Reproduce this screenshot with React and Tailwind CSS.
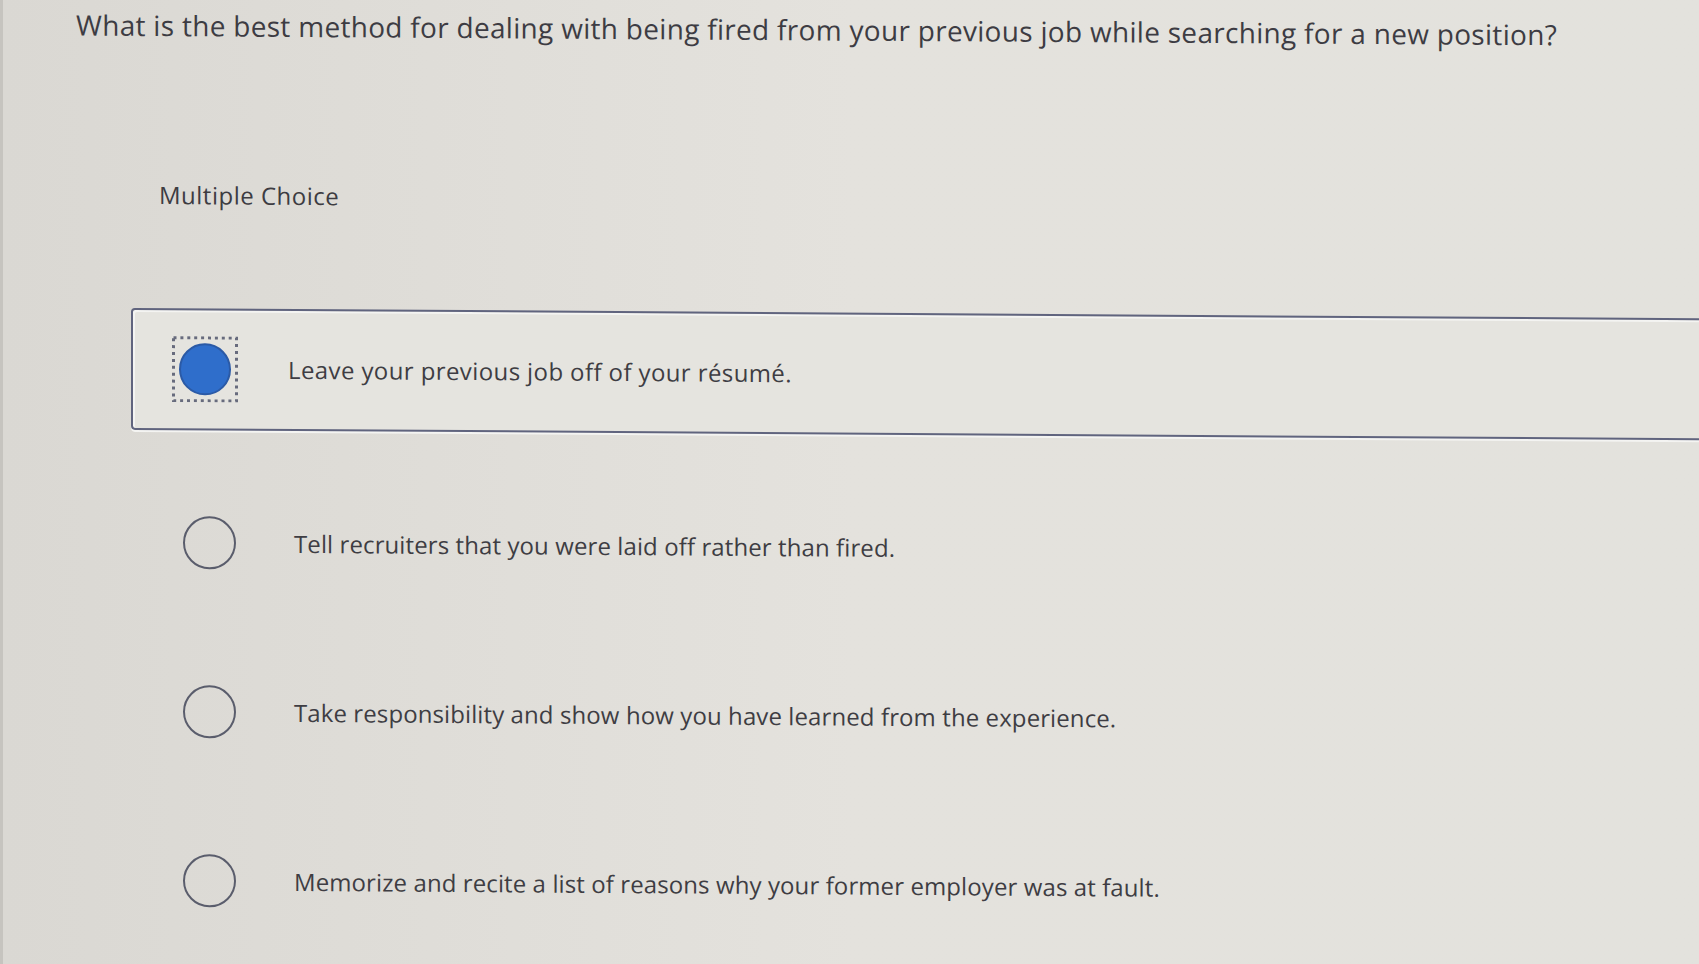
import React from "react";

const font = { fontFamily: "'Open Sans', Lato, 'Liberation Sans', sans-serif" };

function Radio() {
  return (
    <div className="w-[53px] h-[53px] shrink-0 rounded-full border-2 border-[#5a5d6c]" />
  );
}

function Option({ text }) {
  return (
    <div className="flex items-center h-[169px] pl-[180px]">
      <Radio />
      <div className="ml-[58px] text-[24px] text-[#3e3d43] tracking-[0.1px]">{text}</div>
    </div>
  );
}

export default function App() {
  return (
    <div
      className="relative w-full h-[964px] overflow-hidden bg-gradient-to-r from-[#dad8d3] via-[#e4e2dd] to-[#e3e2dd] border-l-[3px] border-[#c6c4bf]"
      style={font}
    >
      <div className="[transform:skewY(0.38deg)] origin-top-left">
        <div className="pt-[4px] pl-[73px] text-[28px] leading-[40px] text-[#3d3c43] tracking-[0.3px] whitespace-nowrap">
          What is the best method for dealing with being fired from your previous job while searching for a new position?
        </div>
        <div className="mt-[134px] pl-[156px] text-[24px] leading-[32px] text-[#3d3c42] tracking-[0.5px]">
          Multiple Choice
        </div>
        <div className="mt-[97px] ml-[128px] -mr-[20px] h-[122px] flex items-center rounded-l-[4px] border-2 border-[#60647e] bg-[#e5e4df] shadow-[inset_2px_2px_0_#f4f4f2,0_2px_0_#f4f4f2]">
          <div className="ml-[39px] w-[66px] h-[66px] shrink-0 relative flex items-center justify-center">
            <svg className="absolute inset-0" width="66" height="66" viewBox="0 0 66 66">
              <rect x="1.5" y="1.5" width="63" height="63" fill="none" stroke="#676b7d" strokeWidth="3" strokeDasharray="3 3.9" />
            </svg>
            <div className="w-[52px] h-[52px] rounded-full bg-[#2f6ecb] border-2 border-[#2b5aa6]" />
          </div>
          <div className="ml-[50px] text-[24px] text-[#3e3d43] tracking-[0.4px]">
            Leave your previous job off of your résumé.
          </div>
        </div>
        <div className="mt-[28px]">
          <Option text="Tell recruiters that you were laid off rather than fired." />
          <Option text="Take responsibility and show how you have learned from the experience." />
          <Option text="Memorize and recite a list of reasons why your former employer was at fault." />
        </div>
      </div>
    </div>
  );
}
